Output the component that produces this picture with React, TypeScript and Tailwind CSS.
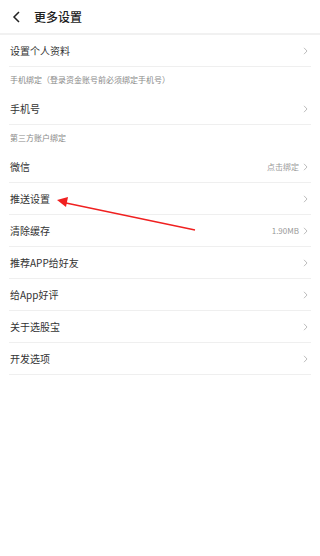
import React from 'react'

const Chevron = () => (
  <svg width="5" height="8" viewBox="0 0 5 8" className="ml-1 shrink-0">
    <path d="M1 0.8 L4 4 L1 7.2" fill="none" stroke="#b5b5b5" strokeWidth="0.9" />
  </svg>
)

const Row = ({ label, value }: { label: string; value?: string }) => (
  <div className="mx-[9px] flex h-8 items-center justify-between border-b border-[#efefef] pl-px pr-[3px]">
    <span className="text-[10px] text-[#333]">{label}</span>
    <div className="flex items-center">
      {value && <span className="text-[8px] text-[#999]">{value}</span>}
      <Chevron />
    </div>
  </div>
)

const Section = ({ label }: { label: string }) => (
  <div className="flex h-[26px] items-center px-[10px] text-[8px] text-[#888]">{label}</div>
)

export default function App() {
  return (
    <div
      className="relative h-[556px] w-[320px] overflow-hidden bg-white"
      style={{ fontFamily: '"Noto Sans CJK SC", "Noto Sans", sans-serif' }}
    >
      <div className="flex h-[33px] items-center pl-[12px]">
        <svg width="9" height="12" viewBox="0 0 9 12">
          <path d="M7 1 L2 6 L7 11" fill="none" stroke="#222" strokeWidth="1.5" />
        </svg>
        <span className="ml-[13px] text-[12px] font-medium text-[#222]">更多设置</span>
      </div>
      <div className="h-[2px] bg-[#f1f1f1]" />

      <Row label="设置个人资料" />
      <Section label="手机绑定（登录资金账号前必须绑定手机号）" />
      <Row label="手机号" />
      <Section label="第三方账户绑定" />
      <Row label="微信" value="点击绑定" />
      <Row label="推送设置" />
      <Row label="清除缓存" value="1.90MB" />
      <Row label="推荐APP给好友" />
      <Row label="给App好评" />
      <Row label="关于选股宝" />
      <Row label="开发选项" />

      {/* red annotation arrow */}
      <svg className="pointer-events-none absolute left-0 top-0" width="320" height="556">
        <line x1="195" y1="230" x2="66" y2="203" stroke="#f02020" strokeWidth="1.3" />
        <polygon points="57,200 68,197 66,207" fill="#f02020" />
      </svg>
    </div>
  )
}
